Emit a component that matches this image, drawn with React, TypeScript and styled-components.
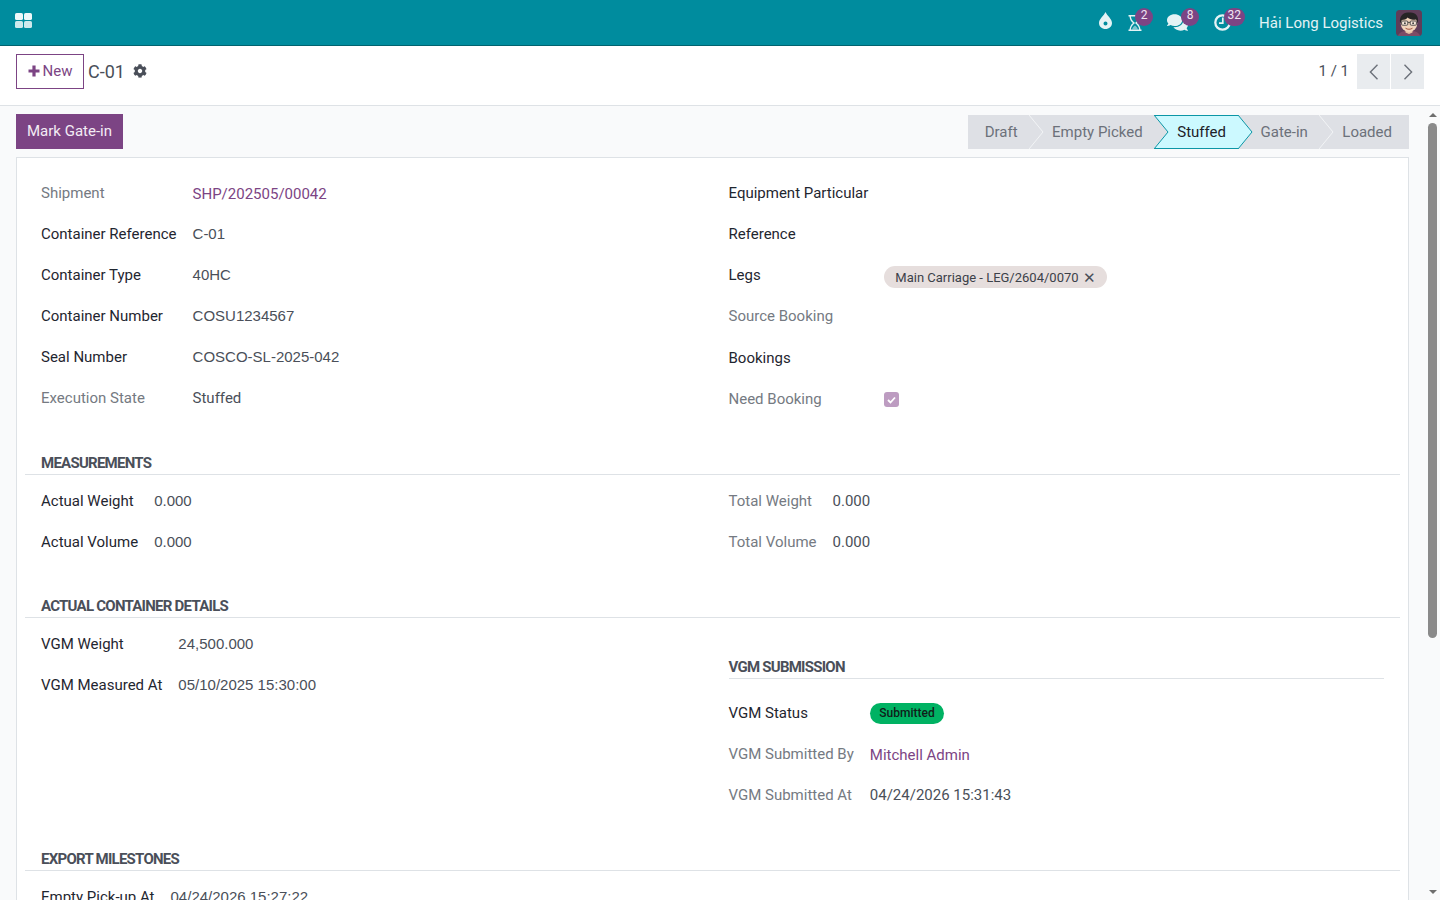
import { createGlobalStyle } from 'styled-components'
import styled from 'styled-components'
import { FaCog, FaComments } from 'react-icons/fa'

const GlobalStyle = createGlobalStyle`
  html, body {
    margin: 0;
    height: 100%;
    overflow: hidden;
  }
  body {
    font-family: Roboto, "Noto Sans", sans-serif;
    font-size: 15px;
    line-height: 1.5;
    color: #4a4f59;
    background: #fff;
  }
`

type FieldT = {
  label: string
  value?: string
  editable?: boolean
  link?: boolean
}

const stages = ['Draft', 'Empty Picked', 'Stuffed', 'Gate-in', 'Loaded']

const mainLeft: FieldT[] = [
  { label: 'Shipment', value: 'SHP/202505/00042', link: true },
  { label: 'Container Reference', value: 'C-01', editable: true },
  { label: 'Container Type', value: '40HC', editable: true },
  { label: 'Container Number', value: 'COSU1234567', editable: true },
  { label: 'Seal Number', value: 'COSCO-SL-2025-042', editable: true },
  { label: 'Execution State', value: 'Stuffed' },
]

const measureLeft: FieldT[] = [
  { label: 'Actual Weight', value: '0.000', editable: true },
  { label: 'Actual Volume', value: '0.000', editable: true },
]

const measureRight: FieldT[] = [
  { label: 'Total Weight', value: '0.000' },
  { label: 'Total Volume', value: '0.000' },
]

const vgmLeft: FieldT[] = [
  { label: 'VGM Weight', value: '24,500.000', editable: true },
  { label: 'VGM Measured At', value: '05/10/2025 15:30:00', editable: true },
]

const milestones: FieldT[] = [{ label: 'Empty Pick-up At', value: '04/24/2026 15:27:22', editable: true }]

const Fields = ({ items }: { items: FieldT[] }) => (
  <FieldGrid>
    {items.map((item) => (
      <FieldRow key={item.label}>
        <Label $strong={item.editable}>{item.label}</Label>
        {item.link ? <LinkValue>{item.value}</LinkValue> : <Value $input={item.editable}>{item.value}</Value>}
      </FieldRow>
    ))}
  </FieldGrid>
)

const AppsIcon = () => (
  <svg width="17" height="15" viewBox="0 0 17 15">
    <rect width="8" height="7" rx="1.6" fill="#eef8f9" />
    <rect x="9" width="8" height="7" rx="1.6" fill="#eef8f9" />
    <rect y="8" width="8" height="7" rx="1.6" fill="#cfe9ec" />
    <rect x="9" y="8" width="8" height="7" rx="1.6" fill="#cfe9ec" />
  </svg>
)

const DropIcon = () => (
  <svg width="13" height="17" viewBox="0 0 13 17">
    <path
      fillRule="evenodd"
      d="M6.5 0C8 3.5 13 7 13 11C13 14.5 10 17 6.5 17C3 17 0 14.5 0 11C0 7 5 3.5 6.5 0ZM6.5 9.5A2 2 0 1 0 6.5 13.5A2 2 0 1 0 6.5 9.5Z"
      fill="currentColor"
    />
  </svg>
)

const HourglassIcon = () => (
  <svg width="14" height="16" viewBox="0 0 14 16" fill="none">
    <path d="M0.5 0.8H13.5M0.5 15.2H13.5" stroke="currentColor" strokeWidth="1.5" />
    <path
      d="M2.2 1C2.2 4.5 4 6.5 6 8C4 9.5 2.2 11.5 2.2 15M11.8 1C11.8 4.5 10 6.5 8 8C10 9.5 11.8 11.5 11.8 15"
      stroke="currentColor"
      strokeWidth="1.4"
    />
    <path d="M4 14.5C4.5 12.5 6 11.2 7 10.5C8 11.2 9.5 12.5 10 14.5Z" fill="currentColor" opacity="0.55" />
  </svg>
)

const ClockIcon = () => (
  <svg width="17" height="17" viewBox="0 0 17 17" fill="none">
    <circle cx="8.5" cy="8.5" r="7.2" stroke="currentColor" strokeWidth="2.3" />
    <path d="M8.8 3.5V9.2H5" stroke="currentColor" strokeWidth="1.7" />
  </svg>
)

const PlusIcon = () => (
  <svg width="12" height="12" viewBox="0 0 12 12">
    <path d="M4.4 0.5H7.6V4.4H11.5V7.6H7.6V11.5H4.4V7.6H0.5V4.4H4.4Z" fill="currentColor" />
  </svg>
)

const Avatar = () => (
  <svg width="26" height="26" viewBox="0 0 26 26">
    <rect width="26" height="26" rx="3.5" fill="#5f3d58" />
    <path d="M2 26C3 22 8 20.5 13 20.5C18 20.5 23 22 24 26Z" fill="#7d4c66" />
    <path d="M9.5 18.5H16.5V22.5L13 24L9.5 22.5Z" fill="#e8c2a4" />
    <ellipse cx="13" cy="13.5" rx="8.2" ry="8.5" fill="#f2d4bb" />
    <path
      d="M4.2 13C2.8 6.5 7.5 1.8 13 2.6C18.5 1.6 23.5 5.5 21.8 13L20.4 9.6C17.5 10 13.5 9.2 11.5 7.4C10.4 9.2 8 9.9 5.8 9.9Z"
      fill="#272425"
    />
    <rect x="5.6" y="11" width="6.2" height="4.2" rx="1" fill="#f7e6d8" stroke="#3f3f3f" strokeWidth="0.9" />
    <rect x="14.2" y="11" width="6.2" height="4.2" rx="1" fill="#f7e6d8" stroke="#3f3f3f" strokeWidth="0.9" />
    <path d="M11.8 12.4H14.2" stroke="#3f3f3f" strokeWidth="0.9" />
    <circle cx="8.9" cy="13.2" r="0.9" fill="#333" />
    <circle cx="17.1" cy="13.2" r="0.9" fill="#333" />
    <path d="M9.5 18.2C11.2 19.6 14.8 19.6 16.5 18.2" stroke="#a4523f" fill="none" />
  </svg>
)

const PagerArrow = ({ flip }: { flip?: boolean }) => (
  <svg width="10" height="16" viewBox="0 0 10 16" fill="none">
    <path d={flip ? 'M1.5 0.8L8.6 8L1.5 15.2' : 'M8.5 0.8L1.4 8L8.5 15.2'} stroke="currentColor" strokeWidth="1.4" />
  </svg>
)

export default function App() {
  return (
    <Page>
      <GlobalStyle />
      <NavBar>
        <AppsButton>
          <AppsIcon />
        </AppsButton>
        <Systray>
          <TrayIcon $width={29}>
            <DropRaise>
              <DropIcon />
            </DropRaise>
          </TrayIcon>
          <TrayIcon $width={39}>
            <HourglassIcon />
            <Badge $left={7}>2</Badge>
          </TrayIcon>
          <TrayIcon $width={47}>
            <FaComments size={21} />
            <Badge $left={14}>8</Badge>
          </TrayIcon>
          <TrayIcon $width={45}>
            <ClockIcon />
            <Badge $left={10}>32</Badge>
          </TrayIcon>
          <UserName>Hải Long Logistics</UserName>
          <Avatar />
        </Systray>
      </NavBar>

      <ControlPanel>
        <NewButton>
          <PlusIcon />
          New
        </NewButton>
        <RecordName>C-01</RecordName>
        <GearIcon>
          <FaCog size={14} />
        </GearIcon>
        <Pager>
          <PagerValue>1 / 1</PagerValue>
          <PagerButton>
            <PagerArrow />
          </PagerButton>
          <PagerButton>
            <PagerArrow flip />
          </PagerButton>
        </Pager>
      </ControlPanel>

      <Body>
        <Content>
          <StatusBar>
            <PrimaryButton>Mark Gate-in</PrimaryButton>
            <Stages>
              {stages.map((stage, index) => {
                const active = stage === 'Stuffed'
                const beforeActive = stages[index + 1] === 'Stuffed'
                const last = index === stages.length - 1
                return (
                  <Stage key={stage} $active={active} $first={index === 0} $last={last}>
                    {stage}
                    {!last && (
                      <StageArrow width="15" height="34" viewBox="0 0 15 34">
                        <path
                          d="M0 0L14 17L0 34"
                          fill={active ? '#ccf9ff' : '#dee0e5'}
                          stroke={active || beforeActive ? '#0b96a6' : '#f3f4f6'}
                          strokeWidth="1"
                        />
                      </StageArrow>
                    )}
                  </Stage>
                )
              })}
            </Stages>
          </StatusBar>

          <Sheet>
            <TwoColumns>
              <Column>
                <Fields items={mainLeft} />
              </Column>
              <Column>
                <FieldGrid>
                  <FieldRow>
                    <Label $strong>Equipment Particular</Label>
                    <Value />
                  </FieldRow>
                  <FieldRow>
                    <Label $strong>Reference</Label>
                    <Value />
                  </FieldRow>
                  <FieldRow>
                    <Label $strong>Legs</Label>
                    <Value>
                      <Tag>
                        Main Carriage - LEG/2604/0070
                        <TagClose>✕</TagClose>
                      </Tag>
                    </Value>
                  </FieldRow>
                  <FieldRow>
                    <Label>Source Booking</Label>
                    <Value />
                  </FieldRow>
                  <FieldRow $tall>
                    <Label $strong>Bookings</Label>
                    <Value />
                  </FieldRow>
                  <FieldRow>
                    <Label>Need Booking</Label>
                    <Value>
                      <CheckBox>
                        <svg width="9" height="8" viewBox="0 0 9 8" fill="none">
                          <path d="M1 4L3.5 6.5L8 1.5" stroke="#fff" strokeWidth="1.8" />
                        </svg>
                      </CheckBox>
                    </Value>
                  </FieldRow>
                </FieldGrid>
              </Column>
            </TwoColumns>

            <SectionTitle>Measurements</SectionTitle>
            <TwoColumns>
              <Column>
                <Fields items={measureLeft} />
              </Column>
              <Column>
                <Fields items={measureRight} />
              </Column>
            </TwoColumns>

            <SectionTitle>Actual Container Details</SectionTitle>
            <TwoColumns>
              <Column>
                <Fields items={vgmLeft} />
              </Column>
              <Column>
                <InnerTitle>VGM Submission</InnerTitle>
                <FieldGrid>
                  <FieldRow $tall>
                    <Label $strong>VGM Status</Label>
                    <Value>
                      <StatusPill>Submitted</StatusPill>
                    </Value>
                  </FieldRow>
                  <FieldRow>
                    <Label>VGM Submitted By</Label>
                    <LinkValue>Mitchell Admin</LinkValue>
                  </FieldRow>
                  <FieldRow>
                    <Label>VGM Submitted At</Label>
                    <Value>04/24/2026 15:31:43</Value>
                  </FieldRow>
                </FieldGrid>
              </Column>
            </TwoColumns>

            <SectionTitle>Export Milestones</SectionTitle>
            <TwoColumns>
              <Column>
                <Fields items={milestones} />
              </Column>
              <Column />
            </TwoColumns>
          </Sheet>
        </Content>

        <ScrollBar>
          <ScrollUp />
          <ScrollThumb />
          <ScrollDown />
        </ScrollBar>
      </Body>
    </Page>
  )
}

const Page = styled.div`
  display: flex;
  flex-direction: column;
  height: 100vh;
`

const NavBar = styled.header`
  display: flex;
  align-items: stretch;
  justify-content: space-between;
  box-sizing: border-box;
  height: 46px;
  flex: none;
  padding: 0 18px 0 15px;
  background: #008c9e;
  border-bottom: 1px solid #01636f;
  color: #e4f3f5;
`

const AppsButton = styled.div`
  display: flex;
  align-items: center;
  padding-bottom: 5px;
`

const Systray = styled.div`
  display: flex;
  align-items: center;
`

const TrayIcon = styled.div<{ $width: number }>`
  position: relative;
  display: flex;
  align-items: center;
  align-self: stretch;
  width: ${(p) => p.$width}px;
`

const DropRaise = styled.span`
  display: flex;
  margin-top: -5px;
`

const Badge = styled.span<{ $left: number }>`
  position: absolute;
  top: 8px;
  left: ${(p) => p.$left}px;
  box-sizing: border-box;
  min-width: 18px;
  padding: 0 3.5px;
  height: 18px;
  border-radius: 9px;
  background: #7c4484;
  color: #f0e6f2;
  font-size: 12px;
  line-height: 15px;
  text-align: center;
`

const UserName = styled.span`
  margin: 1px 13px 0 0;
  font-size: 15px;
`

const ControlPanel = styled.div`
  display: flex;
  align-items: flex-start;
  box-sizing: border-box;
  height: 60px;
  flex: none;
  padding: 8px 16px 0;
  background: #fff;
  border-bottom: 1px solid #dee2e6;
`

const NewButton = styled.button`
  display: flex;
  align-items: center;
  justify-content: center;
  gap: 3px;
  box-sizing: border-box;
  width: 68px;
  height: 35px;
  padding: 0 0 1px;
  background: #fff;
  border: 1px solid #7c4484;
  color: #7c4484;
  font: inherit;
`

const RecordName = styled.span`
  margin-left: 4px;
  font-size: 18px;
  line-height: 35px;
  color: #4a4f59;
`

const GearIcon = styled.span`
  display: flex;
  align-items: center;
  height: 34px;
  margin-left: 8px;
  color: #4a4f59;
`

const Pager = styled.div`
  display: flex;
  align-items: center;
  gap: 1px;
  margin-left: auto;
`

const PagerValue = styled.span`
  margin-right: 7px;
`

const PagerButton = styled.div`
  display: flex;
  align-items: center;
  justify-content: center;
  width: 33px;
  height: 35px;
  background: #e9ecef;
  color: #6c717a;
`

const Body = styled.div`
  display: flex;
  flex: 1;
  min-height: 0;
  background: #f9fafb;
`

const Content = styled.main`
  flex: 1;
  min-width: 0;
  overflow: hidden;
`

const ScrollBar = styled.div`
  display: flex;
  flex-direction: column;
  align-items: center;
  flex: none;
  box-sizing: border-box;
  width: 15px;
  padding: 7px 0 6px;
`

const ScrollUp = styled.span`
  width: 0;
  height: 0;
  border: 4.5px solid transparent;
  border-top: 0;
  border-bottom: 4.5px solid #6e6e6e;
`

const ScrollThumb = styled.span`
  width: 9px;
  height: 515px;
  margin-top: 6px;
  border-radius: 5px;
  background: #8a8a8a;
`

const ScrollDown = styled.span`
  width: 0;
  height: 0;
  margin-top: auto;
  border: 4.5px solid transparent;
  border-bottom: 0;
  border-top: 4.5px solid #6e6e6e;
`

const StatusBar = styled.div`
  display: flex;
  align-items: flex-start;
  justify-content: space-between;
  box-sizing: border-box;
  height: 51px;
  padding: 8px 16px 0;
`

const PrimaryButton = styled.button`
  height: 35px;
  padding: 0 11px;
  background: #7c4484;
  border: 0;
  color: #f3ecf4;
  font: inherit;
`

const Stages = styled.div`
  display: flex;
  height: 34px;
  margin-top: 1px;
  background: #dee0e5;
`

const Stage = styled.div<{ $active?: boolean; $first?: boolean; $last?: boolean }>`
  position: relative;
  display: flex;
  align-items: center;
  box-sizing: border-box;
  padding: 0 ${(p) => (p.$last ? 17 : 11.5)}px 0 ${(p) => (p.$first ? 17 : 23)}px;
  background: ${(p) => (p.$active ? '#ccf9ff' : 'transparent')};
  box-shadow: ${(p) => (p.$active ? 'inset 0 1px 0 #0b96a6, inset 0 -1px 0 #0b96a6' : 'none')};
  color: ${(p) => (p.$active ? '#1d2229' : '#6c717a')};
`

const StageArrow = styled.svg`
  position: absolute;
  top: 0;
  left: 100%;
  z-index: 1;
`

const Sheet = styled.section`
  box-sizing: border-box;
  margin: 0 16px;
  padding: 15px 8px 16px;
  background: #fff;
  border: 1px solid #dee2e6;
  border-bottom: 0;
`

const TwoColumns = styled.div`
  display: grid;
  grid-template-columns: 1fr 1fr;
`

const Column = styled.div`
  min-width: 0;
  padding: 0 16px;
`

const FieldGrid = styled.div`
  display: grid;
  grid-template-columns: max-content 1fr;
  column-gap: 16px;
`

const FieldRow = styled.div<{ $tall?: boolean }>`
  display: grid;
  grid-column: 1 / -1;
  grid-template-columns: subgrid;
  align-items: center;
  height: ${(p) => (p.$tall ? 42 : 41)}px;
`

const Label = styled.span<{ $strong?: boolean }>`
  color: ${(p) => (p.$strong ? '#1f2630' : '#757a82')};
  white-space: nowrap;
`

const Value = styled.span<{ $input?: boolean }>`
  display: flex;
  align-items: center;
  min-width: 0;
  font-family: ${(p) => (p.$input ? '"Liberation Sans", Arial, sans-serif' : 'inherit')};
`

const LinkValue = styled.span`
  color: #7c4484;
  padding-top: 1px;
`

const SectionTitle = styled.h3`
  margin: 32px 0 6px;
  padding: 0 16px;
  height: 22px;
  border-bottom: 1px solid #dee2e6;
  color: #4a4f59;
  font-size: 15px;
  font-weight: 700;
  line-height: 22px;
  letter-spacing: -0.75px;
  text-transform: uppercase;
`

const InnerTitle = styled(SectionTitle)`
  margin: 32px 0 13px;
  padding: 0;
`

const Tag = styled.span`
  display: inline-flex;
  align-items: center;
  box-sizing: border-box;
  height: 22px;
  margin-top: 3px;
  padding: 1px 11px 0;
  border-radius: 11px;
  background: #e6dedd;
  color: #3c4149;
  font-size: 13px;
`

const TagClose = styled.span`
  margin-left: 4px;
  font-size: 15px;
  line-height: 20px;
  color: #4a4f59;
`

const CheckBox = styled.span`
  display: inline-flex;
  align-items: center;
  justify-content: center;
  width: 15px;
  height: 15px;
  border-radius: 3px;
  background: #bd9cc1;
`

const StatusPill = styled.span`
  display: inline-flex;
  align-items: center;
  height: 21px;
  padding: 0 9.5px;
  border-radius: 11px;
  background: #00b263;
  color: #10201a;
  font-size: 12px;
  font-weight: 500;
`
